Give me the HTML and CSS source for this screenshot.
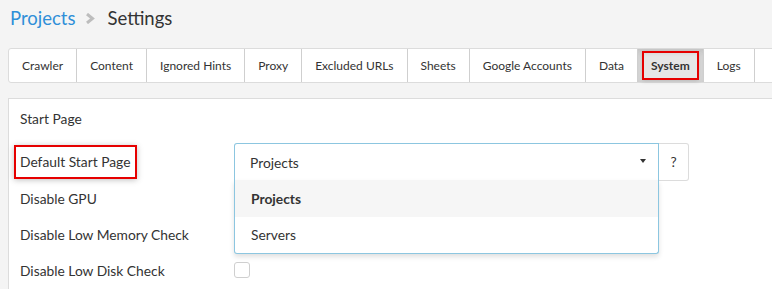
FILE: index.html
```html
<!DOCTYPE html>
<html>
<head>
<meta charset="utf-8">
<link rel="stylesheet" href="styles.css">
</head>
<body>
<div class="page">
  <div class="crumbs">
    <a class="crumb-link">Projects</a>
    <svg class="chev" width="10" height="11" viewBox="0 0 10 11"><path d="M2 1 L7.5 5.5 L2 10" fill="none" stroke="#bdbdbd" stroke-width="3"/></svg>
    <span class="crumb-current">Settings</span>
  </div>

  <div class="tabs">
    <div class="tab">Crawler</div>
    <div class="tab">Content</div>
    <div class="tab">Ignored Hints</div>
    <div class="tab">Proxy</div>
    <div class="tab">Excluded URLs</div>
    <div class="tab">Sheets</div>
    <div class="tab">Google Accounts</div>
    <div class="tab">Data</div>
    <div class="tab active"><span class="mark-tab">System</span></div>
    <div class="tab">Logs</div>
  </div>

  <div class="panel">
    <div class="section-title">Start Page</div>
    <div class="row row-select">
      <div class="label"><span class="marked">Default Start Page</span></div>
      <div class="control">
        <div class="select">
          <span class="select-value">Projects</span>
          <span class="caret"></span>
          <div class="menu">
            <div class="option selected">Projects</div>
            <div class="option">Servers</div>
          </div>
        </div>
        <div class="help">?</div>
      </div>
    </div>
    <div class="row"><div class="label">Disable GPU</div></div>
    <div class="row"><div class="label">Disable Low Memory Check</div></div>
    <div class="row"><div class="label">Disable Low Disk Check</div><div class="control"><span class="checkbox"></span></div></div>
  </div>
</div>
</body>
</html>
```

FILE: styles.css
```css
html, body {
  margin: 0;
  padding: 0;
  background: #f4f4f4;
  overflow: hidden;
}
body {
  font-family: Lato, "Open Sans", sans-serif;
  color: #333;
  font-size: 13.8px;
}
.page {
  width: 800px;
  height: 289px;
  overflow: hidden;
  padding: 6px 0 0 8px;
}
.crumbs {
  display: flex;
  align-items: center;
  height: 24px;
  font-size: 18.5px;
  line-height: 24px;
  padding-left: 2px;
}
.crumb-link {
  color: #2f8fd8;
}
.chev {
  margin: 0 12px 0 10px;
}
.crumb-current {
  color: #333;
}
.tabs {
  margin-top: 18px;
  display: flex;
  background: #fff;
  border: 1px solid #dcdcdc;
  border-radius: 3px;
  height: 33px;
}
.tab {
  padding: 0 13px;
  line-height: 33px;
  border-right: 1px solid #cfcfcf;
  font-size: 12px;
  color: #333;
  white-space: nowrap;
}
.tab.active {
  background: #e6e6e6;
  box-shadow: inset 0 2px 6px rgba(0,0,0,0.18);
  font-weight: bold;
  padding: 2px 4px 1px 4px;
  line-height: 26px;
}
.mark-tab {
  display: block;
  border: 2px solid #e60000;
  padding: 0 7px;
  height: 25px;
  line-height: 25px;
  box-shadow: 0 1px 4px rgba(0,0,0,0.2);
}
.panel {
  margin-top: 15px;
  background: #fff;
  border: 1px solid #dcdcdc;
  height: 300px;
  padding: 10px 0 0 11px;
}
.section-title {
  line-height: 20px;
  margin-bottom: 14px;
}
.row {
  display: flex;
  align-items: center;
  height: 36px;
}
.row-select {
  height: 37px;
}
.label {
  width: 214px;
}
.marked {
  display: inline-block;
  border: 2px solid #e60000;
  padding: 0 5px 0 4px;
  margin-left: -6px;
  line-height: 30px;
  box-shadow: 0 1px 6px rgba(0,0,0,0.25);
}
.control {
  display: flex;
  align-items: flex-start;
  height: 100%;
}
.row-select .control {
  height: 37px;
}
.select {
  box-sizing: border-box;
  position: relative;
  width: 425px;
  height: 37px;
  border: 1px solid #8cc6e0;
  border-bottom: none;
  border-radius: 3px 0 0 0;
  display: flex;
  align-items: center;
  padding: 0 12px 0 15px;
  background: #fff;
}
.select-value {
  flex: 1;
}
.caret {
  width: 0;
  height: 0;
  border-left: 3.5px solid transparent;
  border-right: 3.5px solid transparent;
  border-top: 4px solid #333;
  margin-top: -3px;
}
.menu {
  position: absolute;
  top: 100%;
  left: -1px;
  right: -1px;
  border: 1px solid #8cc6e0;
  border-top: none;
  border-radius: 0 0 3px 3px;
  background: #fff;
  box-shadow: 0 3px 5px rgba(0,0,0,0.12);
  z-index: 5;
}
.option {
  height: 37px;
  line-height: 37px;
  padding-left: 16px;
}
.option + .option {
  height: 36px;
  line-height: 36px;
}
.option.selected {
  background: #f6f6f6;
  font-weight: bold;
}
.help {
  width: 29px;
  height: 36px;
  border: 1px solid #dcdcdc;
  border-left: none;
  border-radius: 0 3px 3px 0;
  text-align: center;
  line-height: 36px;
  background: #fff;
}
.row:last-child .control {
  align-items: center;
}
.checkbox {
  display: block;
  width: 14px;
  height: 14px;
  border: 1px solid #cfcfcf;
  border-radius: 3px;
  background: #fff;
}
```
